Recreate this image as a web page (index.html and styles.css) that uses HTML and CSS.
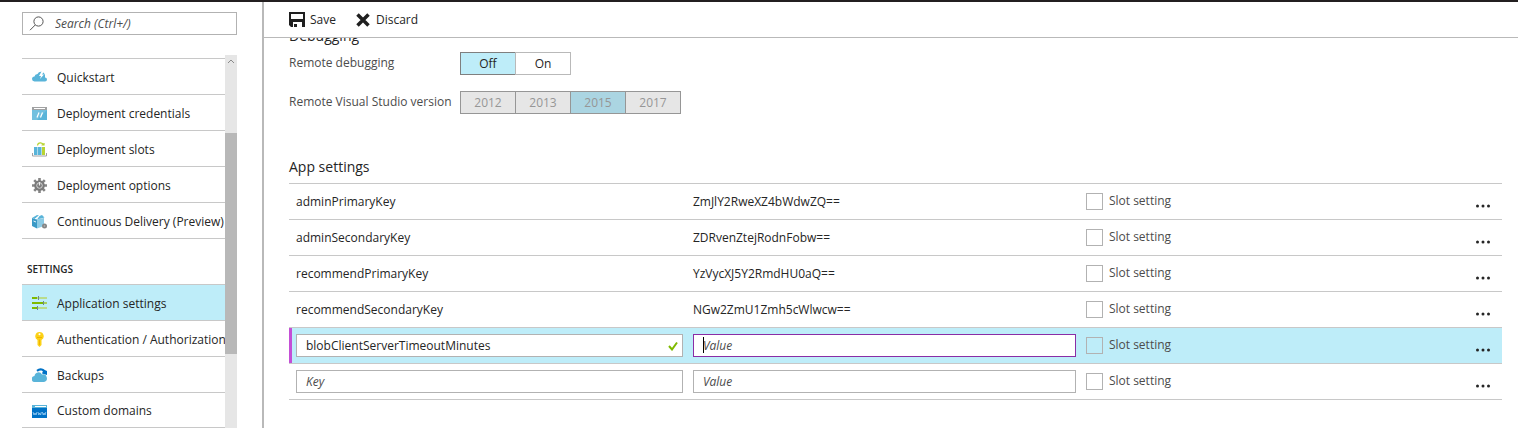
FILE: index.html
```html
<!DOCTYPE html>
<html lang="en">
<head>
<meta charset="utf-8">
<title>Application settings</title>
<link rel="stylesheet" href="styles.css">
</head>
<body>
<div class="blade">
  <aside class="sidebar">
    <div class="search">
      <svg class="search-icon" viewBox="0 0 16 16" aria-hidden="true"><circle cx="9.5" cy="5.500" r="4.6"/><path d="M6.2 9 1 14.2"/></svg>
      <input class="search-input" type="text" placeholder="Search (Ctrl+/)" aria-label="Search">
    </div>
    <div class="menu">
      <nav class="menu-list">
        <a class="item" href="#"><svg viewBox="0 0 15 15"><path fill="#59b4d9" d="M2.500 11.500a2.500 2.500 0 0 1 0-5 3 3 0 0 1 3-2.500 4 4 0 0 1 7.500 1v2.500a2 2 0 0 1 0 4z"/><path fill="#fff" d="M9.500 1.500 7 6h2L8 9l4-4.500h-2l2-3z"/></svg>Quickstart</a>
        <a class="item" href="#"><svg viewBox="0 0 15 15"><path fill="#59b4d9" d="M0 1h15v13H0z"/><path fill="#a0a1a2" d="M0 1h15v3H0z"/><path fill="#fff" d="M2 2h11v1H2z"/><path fill="#8ccbe5" d="M0 4h15L5 14H0z" opacity=".5"/><path stroke="#fff" stroke-width="1.200" d="m5 11.500 2-5m1.500 5 2-5"/></svg>Deployment credentials</a>
        <a class="item" href="#"><svg viewBox="0 0 15 15"><path fill="none" stroke="#a0a1a2" d="M.5 11v3h14v-3"/><path fill="#59b4d9" d="M2 5h3.500v8H2zm4 0h3.500v8H6z"/><path fill="#b8d432" d="M10 5h3v8h-3z"/><path fill="none" stroke="#b8d432" stroke-width="1.200" d="M5.500 3.500C6 0 10.500 0 11.500 3M9.500 3h2.500V1"/></svg>Deployment slots</a>
        <a class="item" href="#"><svg viewBox="0 0 15 15"><g stroke="#858585" stroke-width="2.600"><path d="M7.500 0v15M0 7.500h15M2.200 2.200l10.600 10.600M12.800 2.200 2.200 12.800"/></g><circle cx="7.500" cy="7.500" r="5.300" fill="#7a7a7a"/><circle cx="7.500" cy="7.500" r="2.800" fill="#7a7a7a" stroke="#ddd" stroke-width=".9"/><path stroke="#eee" stroke-width="1.200" d="M7.500 4v3.500"/></svg>Deployment options</a>
        <a class="item" href="#"><svg viewBox="0 0 15 15"><path fill="#3999c6" d="m0 4 5 1.500v9L0 12z"/><path fill="#8ccbe5" d="m5 5.500 7-1.500v8l-7 2.500z"/><path fill="#59b4d9" d="m0 4 5-3 2 .5L3 5zm5 1.500L7.500 2 10 1l2.500 2.500z"/><path stroke="#fff" stroke-width=".9" d="m1.500 7 2.500 1M3 5l4.500-3.500"/><circle cx="12.500" cy="12" r="2.500" fill="#858585"/><circle cx="12.500" cy="12" r=".8" fill="#bbb"/></svg>Continuous Delivery (Preview)</a>
        <h2 class="group">SETTINGS</h2>
        <a class="item item-active" href="#"><svg viewBox="0 0 15 15"><path fill="#b9dc8c" d="M0 1h15v2H0zm0 10h15v2H0z"/><path fill="#7fba00" d="M0 1h5v2H0zm0 5h15v2H0zm0 5h5v2H0z"/><path fill="#a6d060" d="M12 6h3v2h-3z"/><path fill="#6d8791" d="M6 0h1v4H6zm5 5h1v4h-1zM5 10h1v4H5z"/></svg>Application settings</a>
        <a class="item" href="#"><svg viewBox="0 0 15 15"><path fill="#fcd116" d="M7.500 0a4.200 4.200 0 0 1 2 7.900V13l-2 2-2-2V7.900a4.200 4.200 0 0 1 2-7.900z"/><circle cx="7.500" cy="2.200" r="1" fill="#fff"/><path stroke="#f0b400" d="M7.500 7.500V13M5 5.500h5"/></svg>Authentication / Authorization</a>
        <a class="item" href="#"><svg viewBox="0 0 15 15"><path fill="none" stroke="#0072c6" stroke-width="2.200" d="M5 2.800C8 .5 12 1 13 5"/><path fill="#0072c6" d="m10 5.500 1.500-4L15 3v4z"/><path fill="#59b4d9" d="M3 14a3 3 0 0 1-.5-6 4 4 0 0 1 7.500-1.500A3.800 3.800 0 0 1 12 14z"/></svg>Backups</a>
        <a class="item item-last" href="#"><svg viewBox="0 0 15 15"><path fill="#0072c6" d="M0 1h15v13H0z"/><path fill="#59b4d9" d="M0 1h15v3H0z"/><path fill="#fff" d="M3 2h11v1H3z"/><path fill="none" stroke="#9fd0f5" stroke-width=".8" d="m1 8 1 3 1-2 1 2 1-3m1 0 .8 3 .9-2 .9 2 .8-3m1 0 .8 3 .9-2 .9 2 .8-3"/></svg>Custom domains</a>
      </nav>
      <div class="scrollbar" aria-hidden="true">
        <div class="track-above"><svg viewBox="0 0 8 6"><path d="m1 5 3-3 3 3"/></svg></div>
        <div class="thumb"></div>
        <div class="track-below"></div>
      </div>
    </div>
  </aside>
  <main class="main">
    <div class="toolbar">
      <button class="command" type="button"><svg viewBox="0 0 16 16"><path fill="#1f1f1f" fill-rule="evenodd" d="M0 0h16v15h-3v-5H4v5H2l-2-2zM2 2v5h12V2z"/><path fill="#1f1f1f" d="M5 12h3v3H5z"/></svg>Save</button>
      <button class="command" type="button"><svg viewBox="0 0 16 16"><path stroke="#1f1f1f" stroke-width="3.500" d="m2.500 2.500 11 11m0-11-11 11"/></svg>Discard</button>
    </div>
    <div class="content">
      <h2 class="heading heading-scrolled">Debugging</h2>
      <div class="field" role="radiogroup" aria-labelledby="rd">
        <span class="field-label" id="rd">Remote debugging</span>
        <div class="segments">
          <label class="segment"><input type="radio" name="debug" checked><span>Off</span></label>
          <label class="segment"><input type="radio" name="debug"><span>On</span></label>
        </div>
      </div>
      <div class="field" role="radiogroup" aria-labelledby="vs">
        <span class="field-label" id="vs">Remote Visual Studio version</span>
        <div class="segments segments-disabled">
          <label class="segment"><input type="radio" name="vs" disabled><span>2012</span></label>
          <label class="segment"><input type="radio" name="vs" disabled><span>2013</span></label>
          <label class="segment"><input type="radio" name="vs" checked disabled><span>2015</span></label>
          <label class="segment"><input type="radio" name="vs" disabled><span>2017</span></label>
        </div>
      </div>
      <h2 class="heading heading-table">App settings</h2>
      <table class="settings">
        <colgroup><col class="col-key"><col class="col-value"><col><col class="col-more"></colgroup>
        <tbody>
        <tr><td>adminPrimaryKey</td><td>ZmJlY2RweXZ4bWdwZQ==</td><td><label class="slot"><input type="checkbox"><span>Slot setting</span></label></td><td><button class="more" type="button" aria-label="More"><svg viewBox="0 0 14 4"><circle cx="1.500" cy="2" r="1.500"/><circle cx="7" cy="2" r="1.500"/><circle cx="12.500" cy="2" r="1.500"/></svg></button></td></tr>
        <tr><td>adminSecondaryKey</td><td>ZDRvenZtejRodnFobw==</td><td><label class="slot"><input type="checkbox"><span>Slot setting</span></label></td><td><button class="more" type="button" aria-label="More"><svg viewBox="0 0 14 4"><circle cx="1.500" cy="2" r="1.500"/><circle cx="7" cy="2" r="1.500"/><circle cx="12.500" cy="2" r="1.500"/></svg></button></td></tr>
        <tr><td>recommendPrimaryKey</td><td>YzVycXJ5Y2RmdHU0aQ==</td><td><label class="slot"><input type="checkbox"><span>Slot setting</span></label></td><td><button class="more" type="button" aria-label="More"><svg viewBox="0 0 14 4"><circle cx="1.500" cy="2" r="1.500"/><circle cx="7" cy="2" r="1.500"/><circle cx="12.500" cy="2" r="1.500"/></svg></button></td></tr>
        <tr><td>recommendSecondaryKey</td><td>NGw2ZmU1Zmh5cWlwcw==</td><td><label class="slot"><input type="checkbox"><span>Slot setting</span></label></td><td><button class="more" type="button" aria-label="More"><svg viewBox="0 0 14 4"><circle cx="1.500" cy="2" r="1.500"/><circle cx="7" cy="2" r="1.500"/><circle cx="12.500" cy="2" r="1.500"/></svg></button></td></tr>
        <tr class="selected"><td><div class="box"><input type="text" value="blobClientServerTimeoutMinutes" aria-label="Key"><svg class="check" viewBox="0 0 10 10"><path d="m1 5 3 3.500L9 1.500"/></svg></div></td><td><div class="box box-focus"><input type="text" placeholder="Value" aria-label="Value"><span class="caret"></span></div></td><td><label class="slot"><input type="checkbox"><span>Slot setting</span></label></td><td><button class="more" type="button" aria-label="More"><svg viewBox="0 0 14 4"><circle cx="1.500" cy="2" r="1.500"/><circle cx="7" cy="2" r="1.500"/><circle cx="12.500" cy="2" r="1.500"/></svg></button></td></tr>
        <tr><td><div class="box"><input type="text" placeholder="Key" aria-label="Key"></div></td><td><div class="box"><input type="text" placeholder="Value" aria-label="Value"></div></td><td><label class="slot"><input type="checkbox"><span>Slot setting</span></label></td><td><button class="more" type="button" aria-label="More"><svg viewBox="0 0 14 4"><circle cx="1.500" cy="2" r="1.500"/><circle cx="7" cy="2" r="1.500"/><circle cx="12.500" cy="2" r="1.500"/></svg></button></td></tr>
        </tbody>
      </table>
    </div>
  </main>
</div>
</body>
</html>
```
FILE: styles.css
```css
* { box-sizing: border-box; }
body {
  margin: 0;
  font: 12px/16px "Segoe UI", "Open Sans", "Noto Sans", sans-serif;
  color: #252525;
  background: #fff;
}
button, input { font: inherit; color: inherit; }
svg { display: block; flex: none; fill: none; }

.blade {
  display: flex;
  height: 100vh;
  border-top: 2px solid #231f20;
  overflow: hidden;
}

/* Sidebar */
.sidebar {
  display: flex;
  flex-direction: column;
  flex: none;
  width: 264px;
  padding: 10px 25px 0 22px;
  border-right: 2px solid #b9b9b9;
}
.search {
  display: flex;
  align-items: center;
  flex: none;
  height: 23px;
  padding-left: 6px;
  border: 1px solid #b2b2b2;
}
.search-icon { width: 16px; height: 16px; stroke: #555; }
.search-input {
  flex: 1;
  min-width: 0;
  padding: 0 10px;
  border: 0;
  outline: 0;
  background: none;
}
input::placeholder { color: #4c4c4c; font-style: italic; opacity: 1; }
.menu { display: flex; flex: 1; min-height: 0; margin-top: 20px; }
.menu-list { flex: 1; min-width: 0; padding-top: 3px; overflow: hidden; }
.item {
  display: flex;
  align-items: center;
  gap: 10px;
  height: 36px;
  padding: 2px 0 0 10px;
  border-top: 1px solid #c8c8c8;
  color: inherit;
  text-decoration: none;
  white-space: nowrap;
}
.item svg { width: 15px; height: 15px; }
.item-active { background: #beedf9; }
.item-last { border-bottom: 1px solid #c8c8c8; }
.group {
  margin: 0;
  padding: 22px 0 7px 5px;
  border-top: 1px solid #c8c8c8;
  font-size: 10px;
  font-weight: 600;
}
.scrollbar { display: flex; flex-direction: column; flex: none; width: 12px; background: #e6e6e6; }
.track-above { flex: 78; }
.track-above svg { width: 8px; height: 6px; margin: 3px 2px; stroke: #8a8a8a; }
.thumb { flex: 221; background: #b8b8b8; }
.track-below { flex: 74; }

/* Main pane */
.main { display: flex; flex-direction: column; flex: 1; min-width: 0; }
.toolbar {
  display: flex;
  gap: 19px;
  flex: none;
  height: 36px;
  padding-left: 25px;
  border-bottom: 1px solid #b9b9b9;
}
.command {
  display: flex;
  align-items: center;
  gap: 5px;
  padding: 0;
  border: 0;
  background: none;
}
.command svg { width: 16px; height: 16px; }
.content { flex: 1; min-height: 0; padding: 0 16px 0 25px; overflow: hidden; }
.heading { margin: 0; font-size: 14px; font-weight: 400; line-height: 20px; }
.heading-scrolled { margin-top: -12px; }
.heading-table { margin: 43px 0 6px; }
.field { display: flex; align-items: flex-start; margin-top: 16px; color: #4c4c4c; }
.field:first-of-type { margin-top: 6px; }
.field-label { width: 171px; padding-top: 3px; white-space: nowrap; }
.segments { display: flex; }
.segment { position: relative; width: 56px; margin-right: -1px; }
.segment input { position: absolute; opacity: 0; margin: 0; }
.segment span {
  display: block;
  height: 23px;
  border: 1px solid #b9b9b9;
  line-height: 22px;
  text-align: center;
  color: #252525;
}
.segment input:checked + span { position: relative; border-color: #7f7f7f; background: #beedf9; }
.segments-disabled .segment span { border-color: #969696; background: #e6e6e6; color: #969696; }
.segments-disabled .segment input:checked + span { border-color: #969696; background: #abd5e2; }

/* App settings table */
.settings { width: 100%; table-layout: fixed; border-collapse: collapse; border-top: 1px solid #c8c8c8; }
.col-key { width: 33.3%; }
.col-value { width: 32.4%; }
.col-more { width: 33px; }
.settings td { height: 36px; padding: 0; border-bottom: 1px solid #c8c8c8; vertical-align: middle; }
.settings td:first-child { padding-left: 7px; }
.selected { background: #beedf9; }
.selected td:first-child { box-shadow: inset 3px 0 #c44fd6; }
.box {
  position: relative;
  display: flex;
  align-items: center;
  height: 23px;
  margin-right: 10px;
  border: 1px solid #b2b2b2;
  background: #fff;
}
.box-focus { border-color: #8a2da5; }
.box input {
  flex: 1;
  min-width: 0;
  padding: 0 9px;
  border: 0;
  outline: 0;
  background: none;
}
.check { width: 10px; height: 10px; margin-right: 4px; stroke: #7fba00; stroke-width: 2; }
.caret { position: absolute; left: 9px; top: 2px; width: 1px; height: 16px; background: #000; }
.slot { display: flex; align-items: flex-start; gap: 6px; color: #4c4c4c; }
.slot input {
  appearance: none;
  width: 17px;
  height: 17px;
  margin: 0;
  border: 1px solid #b2b2b2;
}
.more { display: block; padding: 9px 7px 0; border: 0; background: none; }
.more svg { width: 14px; height: 4px; fill: #252525; }
```
